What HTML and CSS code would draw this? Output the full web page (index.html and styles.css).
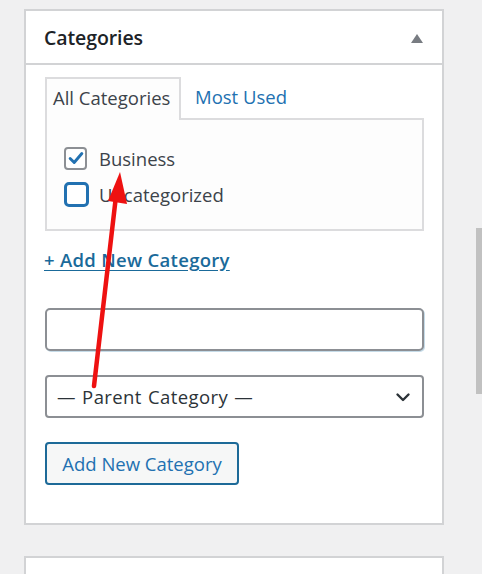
FILE: index.html
```html
<!DOCTYPE html>
<html>
<head>
<meta charset="utf-8">
<link rel="stylesheet" href="styles.css">
</head>
<body>
<div class="page">
  <div class="panel">
    <div class="panel-head">
      <h2 class="panel-title">Categories</h2>
      <span class="toggle"></span>
    </div>
    <div class="panel-body">
      <div class="tabs">
        <div class="tab active">All Categories</div>
        <div class="tab">Most Used</div>
      </div>
      <div class="tab-box">
        <label class="cat"><span class="cb checked"><svg viewBox="0 0 20 20" width="18" height="18"><path d="M3.5 10.5 L8 15 L16.5 5" fill="none" stroke="#2271b1" stroke-width="3.2" stroke-linecap="round" stroke-linejoin="round"/></svg></span><span class="cat-label">Business</span></label>
        <label class="cat"><span class="cb focus"></span><span class="cat-label">Uncategorized</span></label>
      </div>
      <a class="add-link">+ Add New Category</a>
      <div class="field"></div>
      <div class="select"><span class="select-text">— Parent Category —</span><svg viewBox="0 0 16 16" width="16" height="16"><path d="M2.5 5.5 L8 11 L13.5 5.5" fill="none" stroke="#2c3338" stroke-width="2.4" stroke-linecap="round" stroke-linejoin="round"/></svg></div>
      <button class="btn">Add New Category</button>
    </div>
  </div>
  <div class="panel second"></div>
  <div class="scrollbar"><div class="thumb"></div></div>
  <svg class="arrow" width="482" height="574" viewBox="0 0 482 574">
    <path d="M94 386 L116 196" stroke="#ee1111" stroke-width="4.5" stroke-linecap="round" fill="none"/>
    <path d="M120 172 L127 204 L108 201 Z" fill="#ee1111"/>
  </svg>
</div>
</body>
</html>
```
FILE: styles.css
```css
* { box-sizing: border-box; }
html, body { margin: 0; padding: 0; }
body {
  background: #f0f0f1;
  font-family: "Open Sans", "Noto Sans", sans-serif;
  color: #3c434a;
  width: 482px;
  height: 574px;
  overflow: hidden;
}
.page { position: relative; width: 482px; height: 574px; padding-top: 9px; }
.panel {
  margin-left: 24px;
  width: 420px;
  background: #fff;
  border: 2px solid #d2d3d5;
}
.panel-head {
  height: 54px;
  border-bottom: 2px solid #d2d3d5;
  display: flex;
  align-items: center;
  justify-content: space-between;
  padding: 0 20px 0 18px;
}
.panel-title {
  margin: 0;
  font-size: 19.5px;
  font-weight: 600;
  color: #1d2327;
  letter-spacing: -0.1px;
}
.toggle {
  width: 0; height: 0;
  border-left: 6px solid transparent;
  border-right: 6px solid transparent;
  border-bottom: 9px solid #787c82;
  margin-right: -1px;
  margin-top: 2px;
}
.panel-body { padding: 12px 18px 38px 19px; }
.tabs { display: flex; align-items: flex-start; height: 41px; }
.tab {
  font-size: 18.5px;
  color: #2271b1;
  padding: 0 7px 0 14px;
  height: 41px;
  line-height: 40px;
}
.tab.active {
  color: #3c434a;
  background: #fdfdfd;
  border: 2px solid #dcdcde;
  border-bottom: none;
  width: 136px;
  height: 43px;
  padding: 0 0 0 6px;
  position: relative;
  z-index: 1;
  line-height: 38px;
}
.tab-box {
  width: 379px;
  height: 113px;
  border: 2px solid #dcdcde;
  background: #fdfdfd;
  padding: 26px 0 0 17px;
}
.cat { display: flex; align-items: center; height: 36px; }
.cat:first-child { margin-top: -6px; }
.cb {
  width: 23px; height: 23px;
  border: 2px solid #8c8f94;
  border-radius: 4px;
  background: #fff;
  display: inline-flex;
  align-items: center;
  justify-content: center;
  margin-right: 12px;
}
.cb.focus { border: 3px solid #2271b1; border-radius: 5px; width: 25px; height: 25px; margin-right: 10px; }
.cat-label { font-size: 18.5px; color: #3c434a; }
.add-link {
  display: block;
  margin-top: 17px;
  margin-left: -1px;
  font-size: 18.5px;
  font-weight: 600;
  color: #1a6a9a;
  text-decoration: underline;
  text-underline-offset: 3px;
  line-height: 24px;
  letter-spacing: 0.3px;
}
.field {
  margin-top: 36px;
  width: 379px;
  height: 43px;
  border: 2px solid #8c8f94;
  border-radius: 5px;
  background: #fff;
  box-shadow: 1px 1px 0 #c5dbe8;
}
.select {
  margin-top: 24px;
  width: 379px;
  height: 43px;
  border: 2px solid #8c8f94;
  border-radius: 4px;
  background: #fff;
  display: flex;
  align-items: center;
  justify-content: space-between;
  padding: 0 11px 0 10px;
  font-size: 18.5px;
  color: #2c3338;
}
.select-text { letter-spacing: 0.4px; word-spacing: 1px; }
.btn {
  margin-top: 24px;
  display: block;
  height: 43px;
  width: 194px;
  border: 2px solid #1d6a98;
  border-radius: 4px;
  background: #f6f7f7;
  color: #2271b1;
  font-family: inherit;
  font-size: 18.5px;
  padding: 0;
}
.panel.second { margin-top: 31px; height: 40px; border-bottom: none; }
.scrollbar {
  position: absolute;
  left: 476px; top: 228px;
  width: 6px; height: 166px;
}
.thumb { width: 6px; height: 100%; background: #c1c1c1; }
.arrow { position: absolute; left: 0; top: 0; pointer-events: none; }
```
